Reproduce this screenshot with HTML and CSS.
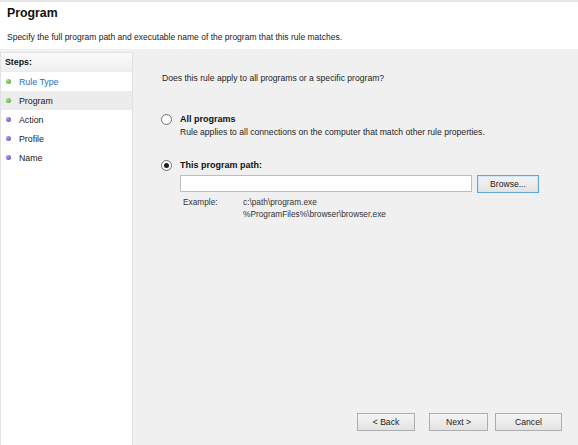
FILE: index.html
```html
<!DOCTYPE html>
<html>
<head>
<meta charset="utf-8">
<link rel="stylesheet" href="styles.css">
</head>
<body>
<div class="window">
  <div class="header">
    <div class="title">Program</div>
    <div class="subtitle">Specify the full program path and executable name of the program that this rule matches.</div>
  </div>
  <div class="main">
    <div class="steps">
      <div class="steps-head">Steps:</div>
      <div class="step done link"><span class="dot green"></span>Rule Type</div>
      <div class="step done current"><span class="dot green"></span>Program</div>
      <div class="step"><span class="dot blue"></span>Action</div>
      <div class="step"><span class="dot blue"></span>Profile</div>
      <div class="step"><span class="dot blue"></span>Name</div>
    </div>
    <div class="content">
      <div class="question">Does this rule apply to all programs or a specific program?</div>
      <div class="option first">
        <div class="opt-row"><span class="radio"></span><span class="opt-label">All programs</span></div>
        <div class="opt-desc">Rule applies to all connections on the computer that match other rule properties.</div>
      </div>
      <div class="option second">
        <div class="opt-row"><span class="radio checked"></span><span class="opt-label">This program path:</span></div>
        <div class="path-row">
          <div class="path-input"></div>
          <div class="btn browse">Browse...</div>
        </div>
        <div class="example">
          <div class="ex-label">Example:</div>
          <div class="ex-values">
            <div>c:\path\program.exe</div>
            <div>%ProgramFiles%\browser\browser.exe</div>
          </div>
        </div>
      </div>
      <div class="spacer"></div>
      <div class="buttons">
        <div class="btn back">&lt; Back</div>
        <div class="btn next">Next &gt;</div>
        <div class="btn cancel">Cancel</div>
      </div>
    </div>
  </div>
</div>
</body>
</html>
```

FILE: styles.css
```css
html, body {
  margin: 0;
  padding: 0;
}
body {
  width: 578px;
  height: 445px;
  overflow: hidden;
  background: #f0f0f0;
  font-family: "Liberation Sans", Arial, sans-serif;
  font-size: 9px;
  color: #1e1e1e;
}
.window {
  display: flex;
  flex-direction: column;
  height: 445px;
}
.header {
  background: #ffffff;
  border-top: 2px solid #e6e6e6;
  height: 47px;
  box-sizing: content-box;
  padding-left: 7px;
}
.title {
  font-weight: bold;
  font-size: 12.3px;
  margin-top: 4px;
  line-height: 14px;
  color: #111;
}
.subtitle {
  margin-top: 11px;
  line-height: 12px;
  font-size: 8.5px;
  color: #222;
}
.main {
  flex: 1;
  display: flex;
  padding-top: 3px;
}
.steps {
  width: 133px;
  background: #ffffff;
  border: 1px solid #e2e2e2;
  border-bottom: 0;
  box-sizing: border-box;
  margin-right: 3px;
}
.steps-head {
  height: 18px;
  line-height: 18px;
  padding-left: 4px;
  font-weight: bold;
  font-size: 8.8px;
  background: linear-gradient(#fafafa, #efefef);
  border-bottom: 1px solid #ececec;
  color: #111;
}
.step {
  display: flex;
  align-items: center;
  height: 19px;
  padding-left: 5px;
  font-size: 8.8px;
  color: #222;
}
.step.link {
  color: #2a6cc2;
}
.step.current {
  background: #ececec;
}
.dot {
  width: 5px;
  height: 5px;
  border-radius: 50%;
  margin-right: 8px;
}
.dot.green {
  background: radial-gradient(circle at 35% 35%, #a6e48a, #3f9e2c);
}
.dot.blue {
  background: radial-gradient(circle at 35% 35%, #a9a4f0, #4b44b8);
}
.content {
  flex: 1;
  display: flex;
  flex-direction: column;
  padding-left: 26px;
  padding-right: 16px;
}
.question {
  margin-top: 20px;
  line-height: 12px;
  font-size: 8.6px;
}
.option.first {
  margin-top: 29px;
}
.option.second {
  margin-top: 21px;
}
.opt-row {
  display: flex;
  align-items: center;
  height: 12px;
}
.radio {
  width: 9px;
  height: 9px;
  border: 1px solid #6f6f6f;
  border-radius: 50%;
  background: #fff;
  margin-left: -1px;
  margin-right: 8px;
  position: relative;
  box-sizing: content-box;
}
.radio.checked::after {
  content: "";
  position: absolute;
  left: 2px;
  top: 2px;
  width: 5px;
  height: 5px;
  border-radius: 50%;
  background: #1e1e1e;
}
.opt-label {
  font-weight: bold;
  font-size: 9px;
  color: #111;
}
.opt-desc {
  padding-left: 18px;
  line-height: 12px;
  margin-top: 1px;
  font-size: 8.6px;
}
.path-row {
  display: flex;
  padding-left: 18px;
  margin-top: 4px;
  align-items: flex-start;
}
.path-input {
  width: 292px;
  height: 17px;
  box-sizing: border-box;
  background: #fff;
  border: 1px solid #bdbdbd;
}
.btn {
  height: 18px;
  box-sizing: border-box;
  border: 1px solid #adadad;
  background: linear-gradient(#f4f4f4, #e3e3e3);
  display: flex;
  align-items: center;
  justify-content: center;
  font-size: 8.6px;
  color: #222;
}
.browse {
  width: 62px;
  margin-left: 5px;
  border-color: #5fa6e0;
  box-shadow: inset 0 0 0 1px #cfe6f8;
}
.example {
  display: flex;
  padding-left: 21px;
  margin-top: 3px;
  font-size: 8.3px;
  line-height: 12px;
  color: #333;
}
.ex-label {
  width: 60px;
}
.spacer {
  flex: 1;
}
.buttons {
  display: flex;
  justify-content: flex-end;
  margin-bottom: 14px;
}
.back {
  width: 58px;
}
.next {
  width: 59px;
  margin-left: 14px;
}
.cancel {
  width: 67px;
  margin-left: 7px;
}
```
